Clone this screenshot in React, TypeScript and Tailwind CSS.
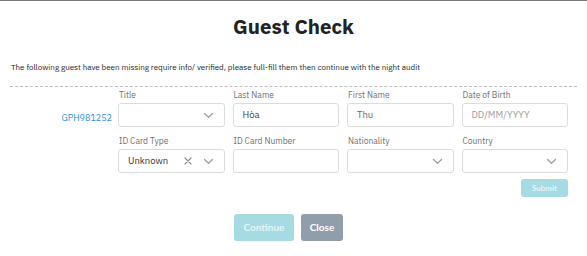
import React from "react";

const Chevron = () => (
  <svg width="11" height="7" viewBox="0 0 11 7" fill="none" stroke="#9aa0a6" strokeWidth="1.3" strokeLinecap="round" strokeLinejoin="round">
    <path d="M1.5 1.5 L5.5 5.2 L9.5 1.5" />
  </svg>
);

const XIcon = () => (
  <svg width="8" height="8" viewBox="0 0 8 8" fill="none" stroke="#8a8f94" strokeWidth="1.2" strokeLinecap="round">
    <path d="M1 1 L7 7 M7 1 L1 7" />
  </svg>
);

const Label = ({ children }: { children: React.ReactNode }) => (
  <div className="h-[16px] text-[8.5px] leading-[16px] text-[#707070] pl-[1px]">{children}</div>
);

const Box = ({ children, className = "" }: { children?: React.ReactNode; className?: string }) => (
  <div className={"h-[24px] border border-[#dcdcdc] rounded-[3px] bg-white flex items-center px-[9px] text-[9.5px] " + className}>{children}</div>
);

const SelectBox = ({ value }: { value?: string }) => (
  <Box>
    <span className="flex-1 text-[#333]">{value}</span>
    <span className="mr-[1px] flex"><Chevron /></span>
  </Box>
);

export default function App() {
  return (
    <div className="w-[587px] h-[256px] bg-white border-t border-[#777] overflow-hidden" style={{ fontFamily: "'IBM Plex Sans', Inter, 'Noto Sans', sans-serif" }}>
      <div className="h-[17px]" />
      <div className="text-center text-[20.5px] leading-[18px] font-bold text-[#222]">Guest Check</div>
      <div className="h-[24px]" />
      <div className="pl-[11px] text-[8px] leading-[14px] text-[#222]">
        The following guest have been missing require info/ verified, please full-fill them then continue with the night audit
      </div>
      <div className="mt-[12px] mx-[10px] border-t border-dashed border-[#bdbdbd]" />
      <div className="flex pr-[19px]">
        <div className="w-[118px] pr-[6px] pt-[16px] text-right">
          <span className="text-[9px] leading-[24px] text-[#2f8fe6]">GPH981252</span>
        </div>
        <div className="flex-1 grid grid-cols-4 gap-x-[8px]">
          <div>
            <Label>Title</Label>
            <SelectBox />
          </div>
          <div>
            <Label>Last Name</Label>
            <Box><span className="text-[#444]">Hòa</span></Box>
          </div>
          <div>
            <Label>First Name</Label>
            <Box><span className="text-[#666]">Thu</span></Box>
          </div>
          <div>
            <Label>Date of Birth</Label>
            <Box><span className="text-[#9a9a9a]">DD/MM/YYYY</span></Box>
          </div>
          <div className="mt-[6px]">
            <Label>ID Card Type</Label>
            <Box>
              <span className="flex-1 text-[#333]">Unknown</span>
              <span className="mr-[11px] flex"><XIcon /></span>
              <span className="mr-[1px] flex"><Chevron /></span>
            </Box>
          </div>
          <div className="mt-[6px]">
            <Label>ID Card Number</Label>
            <Box />
          </div>
          <div className="mt-[6px]">
            <Label>Nationality</Label>
            <SelectBox />
          </div>
          <div className="mt-[6px]">
            <Label>Country</Label>
            <SelectBox />
          </div>
          <div className="col-span-4 flex justify-end mt-[6px]">
            <button className="h-[18px] w-[47px] rounded-[3px] bg-[#a6dbe3] text-[#e4f5f8] text-[8px] font-bold" style={{ fontFamily: "Lato, sans-serif" }}>Submit</button>
          </div>
        </div>
      </div>
      <div className="flex justify-center gap-[7px] mt-[17px] pr-[10px]">
        <button className="h-[27px] w-[60px] rounded-[3px] bg-[#a6dbe3] text-[#e4f5f8] text-[10px] font-bold" style={{ fontFamily: "Lato, sans-serif" }}>Continue</button>
        <button className="h-[27px] w-[42px] rounded-[3px] bg-[#909eab] text-white text-[10px] font-bold" style={{ fontFamily: "Lato, sans-serif" }}>Close</button>
      </div>
    </div>
  );
}
